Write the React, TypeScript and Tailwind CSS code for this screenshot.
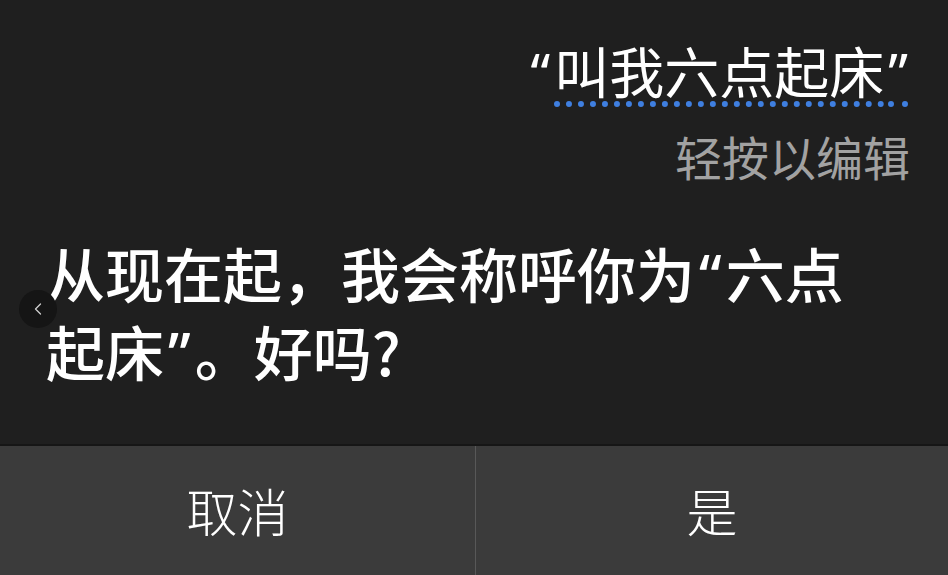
import { ChevronLeft } from "lucide-react";

// quotes are set in a Latin face so they stay narrow like the reference
function Quote({ children }: { children: string }) {
  return <span className="font-['Noto_Sans','Liberation_Sans',sans-serif] px-[4px]">{children}</span>;
}

export default function App() {
  return (
    <div className="w-[948px] h-[575px] flex flex-col bg-[#1f1f1f] text-white overflow-hidden relative font-['Noto_Sans_CJK_SC','Noto_Sans',sans-serif]">
      {/* query echo */}
      <div className="flex flex-col items-end pr-[36px] pt-[34px]">
        <div className="text-[55px] leading-[70px]">
          <Quote>“</Quote>
          <span className="underline decoration-dotted decoration-[#3f7fe0] decoration-[6px] underline-offset-[8px]">
            叫我六点起床<Quote>”</Quote>
          </span>
        </div>
        <div className="text-[47px] leading-[58px] text-[#a2a2a2] mt-[20px] mr-[2px]">轻按以编辑</div>
      </div>

      {/* response */}
      <div className="pl-[46px] pt-[50px] text-[59px] leading-[76px] font-medium">
        从现在起，我会称呼你为<Quote>“</Quote>六点
        <br />
        起床<Quote>”</Quote>。好吗?
      </div>

      {/* back handle */}
      <div className="absolute left-[19px] top-[290px] w-[38px] h-[38px] rounded-full bg-[#151515] flex items-center justify-center">
        <ChevronLeft className="w-[20px] h-[20px] text-[#d0d0d0]" strokeWidth={1.5} />
      </div>

      {/* buttons */}
      <div className="mt-auto h-[131px] flex border-t-2 border-[#161616] bg-[#3b3b3b] text-[51px] font-light">
        <button className="w-[476px] flex items-center justify-center border-r border-[#585858]">取消</button>
        <button className="flex-1 flex items-center justify-center">是</button>
      </div>
    </div>
  );
}
